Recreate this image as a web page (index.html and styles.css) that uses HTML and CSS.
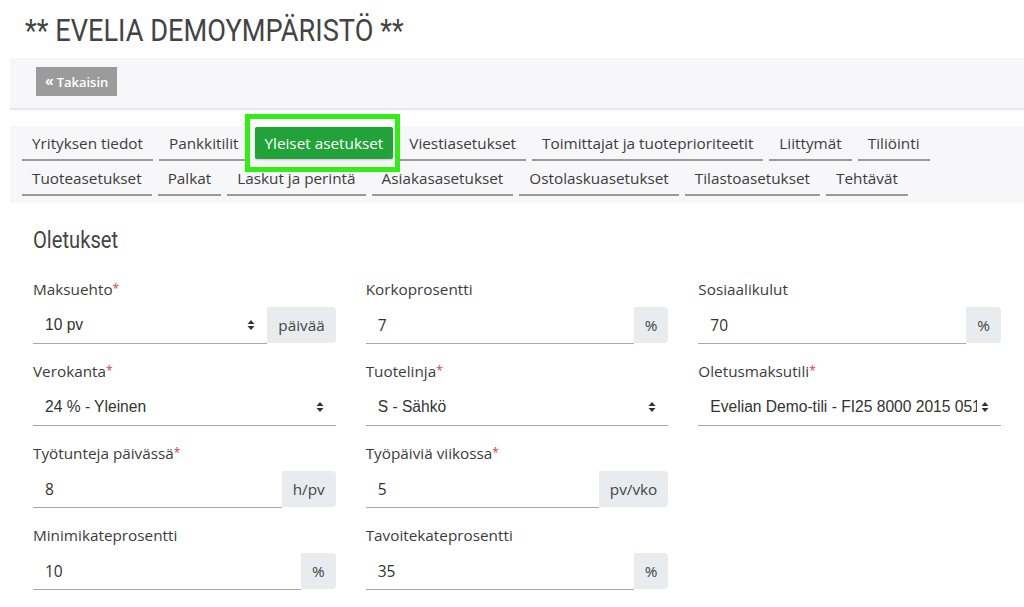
FILE: index.html
```html
<!DOCTYPE html>
<html lang="fi">
<head>
<meta charset="utf-8">
<title>Evelia - Yleiset asetukset</title>
<link rel="stylesheet" href="styles.css">
</head>
<body>
<header class="page-head">
  <h1 class="page-title">** EVELIA DEMOYMPÄRISTÖ **</h1>
</header>

<div class="toolbar">
  <button class="btn-back" type="button"><span class="chev">«</span> Takaisin</button>
</div>

<nav class="tabs">
  <div class="tab-row">
    <a class="tab">Yrityksen tiedot</a>
    <a class="tab">Pankkitilit</a>
    <a class="tab active">Yleiset asetukset<span class="highlight"></span></a>
    <a class="tab">Viestiasetukset</a>
    <a class="tab">Toimittajat ja tuoteprioriteetit</a>
    <a class="tab">Liittymät</a>
    <a class="tab">Tiliöinti</a>
  </div>
  <div class="tab-row">
    <a class="tab">Tuoteasetukset</a>
    <a class="tab">Palkat</a>
    <a class="tab">Laskut ja perintä</a>
    <a class="tab">Asiakasasetukset</a>
    <a class="tab">Ostolaskuasetukset</a>
    <a class="tab">Tilastoasetukset</a>
    <a class="tab">Tehtävät</a>
  </div>
</nav>

<main class="form-section">
  <h2 class="section-title">Oletukset</h2>
  <div class="form-grid">
    <div class="field">
      <label class="label">Maksuehto<span class="req">*</span></label>
      <div class="group">
        <div class="control select"><span class="val">10 pv</span><svg class="arrows" viewBox="0 0 8 12" width="8" height="12"><path d="M4 1 L7.5 5 H0.5 Z M4 11 L0.5 7 H7.5 Z" fill="#333"/></svg></div>
        <span class="addon">päivää</span>
      </div>
    </div>
    <div class="field">
      <label class="label">Korkoprosentti</label>
      <div class="group">
        <div class="control input">7</div>
        <span class="addon">%</span>
      </div>
    </div>
    <div class="field">
      <label class="label">Sosiaalikulut</label>
      <div class="group">
        <div class="control input">70</div>
        <span class="addon">%</span>
      </div>
    </div>

    <div class="field">
      <label class="label">Verokanta<span class="req">*</span></label>
      <div class="group">
        <div class="control select"><span class="val">24 % - Yleinen</span><svg class="arrows" viewBox="0 0 8 12" width="8" height="12"><path d="M4 1 L7.5 5 H0.5 Z M4 11 L0.5 7 H7.5 Z" fill="#333"/></svg></div>
      </div>
    </div>
    <div class="field">
      <label class="label">Tuotelinja<span class="req">*</span></label>
      <div class="group">
        <div class="control select"><span class="val">S - Sähkö</span><svg class="arrows" viewBox="0 0 8 12" width="8" height="12"><path d="M4 1 L7.5 5 H0.5 Z M4 11 L0.5 7 H7.5 Z" fill="#333"/></svg></div>
      </div>
    </div>
    <div class="field">
      <label class="label">Oletusmaksutili<span class="req">*</span></label>
      <div class="group">
        <div class="control select"><span class="val">Evelian Demo-tili - FI25 8000 2015 0512 34</span><svg class="arrows" viewBox="0 0 8 12" width="8" height="12"><path d="M4 1 L7.5 5 H0.5 Z M4 11 L0.5 7 H7.5 Z" fill="#333"/></svg></div>
      </div>
    </div>

    <div class="field">
      <label class="label">Työtunteja päivässä<span class="req">*</span></label>
      <div class="group">
        <div class="control input">8</div>
        <span class="addon">h/pv</span>
      </div>
    </div>
    <div class="field">
      <label class="label">Työpäiviä viikossa<span class="req">*</span></label>
      <div class="group">
        <div class="control input">5</div>
        <span class="addon">pv/vko</span>
      </div>
    </div>
    <div class="field empty"></div>

    <div class="field">
      <label class="label">Minimikateprosentti</label>
      <div class="group">
        <div class="control input">10</div>
        <span class="addon">%</span>
      </div>
    </div>
    <div class="field">
      <label class="label">Tavoitekateprosentti</label>
      <div class="group">
        <div class="control input">35</div>
        <span class="addon">%</span>
      </div>
    </div>
  </div>
</main>
</body>
</html>
```

FILE: styles.css
```css
* { box-sizing: border-box; }

html, body {
  margin: 0;
  padding: 0;
  background: #ffffff;
  font-family: "Open Sans", "Liberation Sans", sans-serif;
  color: #3a3a3a;
  overflow: hidden;
}

.page-head {
  padding: 10px 0 0 25px;
  height: 58px;
}

.page-title {
  margin: 0;
  display: inline-block;
  font-family: Roboto, "Liberation Sans", sans-serif;
  font-weight: 400;
  font-size: 32px;
  line-height: 40px;
  color: #444444;
  transform: scaleX(0.85);
  transform-origin: left center;
  white-space: nowrap;
}

.toolbar {
  margin-left: 10px;
  height: 52px;
  background: #f7f7f9;
  border-bottom: 2px solid #e8e8ec;
  padding: 9px 0 0 26px;
}

.btn-back {
  display: inline-flex;
  align-items: center;
  height: 29px;
  padding: 0 9px;
  border: 0;
  border-radius: 0;
  background: #9b9b9b;
  color: #ffffff;
  font-family: "Open Sans", "Liberation Sans", sans-serif;
  font-size: 13px;
  font-weight: 600;
}

.btn-back .chev {
  font-size: 14px;
  font-weight: 700;
  margin-right: 3px;
  position: relative;
  top: -1px;
}

.tabs {
  margin: 16px 0 0 10px;
  background: #f7f7f9;
  padding: 0 0 7px 12px;
}

.tab-row {
  display: flex;
  gap: 6px;
}

.tab {
  position: relative;
  display: block;
  height: 35px;
  padding: 7px 10px 0;
  border-bottom: 2px solid #9a9a9a;
  font-size: 15.3px;
  line-height: 20px;
  color: #3c3c3c;
  white-space: nowrap;
  text-decoration: none;
}

.tab.active {
  height: 32px;
  margin-top: 1px;
  padding-top: 6px;
  border-bottom: 0;
  background: #22a33a;
  color: #ffffff;
  border-radius: 2px;
  box-shadow: 0 1px 2px rgba(0,0,0,0.2);
}

.highlight {
  position: absolute;
  top: -13px;
  left: -10px;
  right: -7px;
  bottom: -13px;
  border: 5px solid #33ee14;
  pointer-events: none;
}

.form-section {
  padding: 22px 23px 0 33px;
}

.section-title {
  margin: 0 0 24px;
  display: inline-block;
  font-family: Roboto, "Liberation Sans", sans-serif;
  font-weight: 400;
  font-size: 24px;
  line-height: 30px;
  color: #444444;
  transform: scaleX(0.84);
  transform-origin: left center;
}

.form-grid {
  display: grid;
  grid-template-columns: repeat(3, minmax(0, 1fr));
  column-gap: 30px;
  row-gap: 17px;
}

.field {
  display: flex;
  flex-direction: column;
  min-width: 0;
}

.label {
  display: block;
  height: 20px;
  font-size: 15.3px;
  line-height: 20px;
  color: #3c3c3c;
  margin-bottom: 8px;
}

.req {
  color: #e0393e;
  font-size: 12px;
  line-height: 1;
  position: relative;
  top: -2px;
}

.group {
  display: flex;
  align-items: stretch;
  height: 37px;
}

.control {
  flex: 1;
  min-width: 0;
  display: flex;
  align-items: center;
  padding: 0 12px;
  border-bottom: 1px solid #a8a8a8;
  color: #333333;
}

.control.input {
  font-family: "Open Sans", "Liberation Sans", sans-serif;
  font-size: 15.5px;
}

.control.select {
  font-family: "Liberation Sans", Arial, sans-serif;
  font-size: 15.6px;
  padding-right: 12px;
}

.control.select .val {
  flex: 1;
  min-width: 0;
  overflow: hidden;
  white-space: nowrap;
}

.arrows {
  flex: none;
  margin-left: 4px;
}

.addon {
  flex: none;
  display: flex;
  align-items: center;
  padding: 0 11px;
  background: #e9ecef;
  border-radius: 0 4px 4px 0;
  font-size: 15.3px;
  color: #444444;
  margin-bottom: 1px;
}
```
